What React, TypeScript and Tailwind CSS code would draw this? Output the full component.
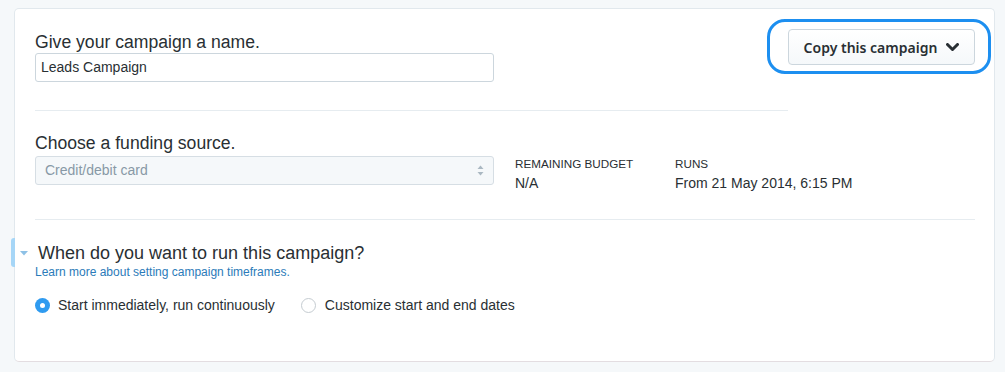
import React from "react";

const heading = "text-[17.6px] leading-[22px] text-[#292f33] font-['Liberation_Sans',Arial,sans-serif]";

export default function App() {
  return (
    <div className="w-[1005px] h-[372px] bg-[#f5f8fa] pt-[8px] pl-[14px] font-['Liberation_Sans',Arial,sans-serif] text-[#292f33]">
      <div className="relative w-[981px] h-[354px] bg-white border border-[#e1e8ed] border-b-[#e3dde1] rounded-[5px] pl-[20px] pr-[19px]">
        {/* Section 1 */}
        <div className="flex">
          <div className="w-[753px] pt-[22px]">
            <div className={heading}>Give your campaign a name.</div>
            <div className="w-[459px] h-[29px] border border-[#ccd6dd] rounded-[3px] bg-white flex items-center pl-[5px] text-[14px]">
              Leads Campaign
            </div>
            <div className="mt-[28px] h-px bg-[#e6ecf0]" />
          </div>
          <div className="flex-1 flex justify-end pt-[20px]">
            <div className="relative h-[36px]">
              <span className="absolute -left-[21px] -right-[16px] -top-[10px] -bottom-[9px] border-[3px] border-[#1d8ff0] rounded-[18px]" />
              <button className="h-[36px] w-[187px] border border-[#ccd6dd] rounded-[4px] bg-gradient-to-b from-white to-[#f5f8fa] flex items-center justify-center gap-[9px] font-['Noto_Sans',sans-serif] font-semibold text-[14px] text-[#292f33]">
                <span>Copy this campaign</span>
                <svg width="13" height="9" viewBox="0 0 13 9">
                  <polyline points="1.5,1.5 6.5,6.5 11.5,1.5" fill="none" stroke="#292f33" strokeWidth="3" strokeLinecap="round" strokeLinejoin="round" />
                </svg>
              </button>
            </div>
          </div>
        </div>

        {/* Section 2 */}
        <div className="pt-[21px]">
          <div className={heading}>Choose a funding source.</div>
          <div className="flex items-start mt-[2px]">
            <div className="w-[459px] h-[29px] border border-[#d6dee4] rounded-[3px] bg-[#f5f8fa] flex items-center justify-between pl-[9px] pr-[9px] text-[14px] text-[#8899a6]">
              <span>Credit/debit card</span>
              <svg width="7" height="11" viewBox="0 0 7 11">
                <polygon points="3.5,0.5 6.5,4 0.5,4" fill="#aab8c2" />
                <polygon points="0.5,7 6.5,7 3.5,10.5" fill="#aab8c2" />
              </svg>
            </div>
            <div className="ml-[21px] w-[160px] pt-[1px]">
              <div className="text-[11.7px] leading-[14px] uppercase">Remaining Budget</div>
              <div className="mt-[3px] text-[14px] leading-[18px]">N/A</div>
            </div>
            <div className="pt-[1px]">
              <div className="text-[11.7px] leading-[14px] uppercase">Runs</div>
              <div className="mt-[3px] text-[14px] leading-[18px]">From 21 May 2014, 6:15 PM</div>
            </div>
          </div>
          <div className="mt-[27px] h-px bg-[#e6ecf0]" />
        </div>

        {/* Section 3 */}
        <div className="relative pt-[22px]">
          <span className="absolute -left-[24px] top-[18px] w-[4px] h-[29px] rounded-l-[3px] bg-[#a6d6f7]" />
          <svg className="absolute -left-[15px] top-[31px]" width="8" height="5" viewBox="0 0 8 5">
            <polygon points="0,0 8,0 4,4.5" fill="#8ec1e6" />
          </svg>
          <div className="text-[18px] leading-[22px] text-[#292f33] pl-[3px]">When do you want to run this campaign?</div>
          <a className="block text-[12px] leading-[16px] text-[#2b7bb9]">Learn more about setting campaign timeframes.</a>
          <div className="mt-[17px] flex items-center h-[16px] text-[14px]">
            <span className="w-[15px] h-[15px] rounded-full bg-[#2f9bf0] flex items-center justify-center">
              <span className="w-[5px] h-[5px] rounded-full bg-white" />
            </span>
            <span className="ml-[8px]">Start immediately, run continuously</span>
            <span className="ml-[26px] w-[15px] h-[15px] rounded-full border border-[#c5ccd1] bg-white" />
            <span className="ml-[9px]">Customize start and end dates</span>
          </div>
        </div>
      </div>
    </div>
  );
}
